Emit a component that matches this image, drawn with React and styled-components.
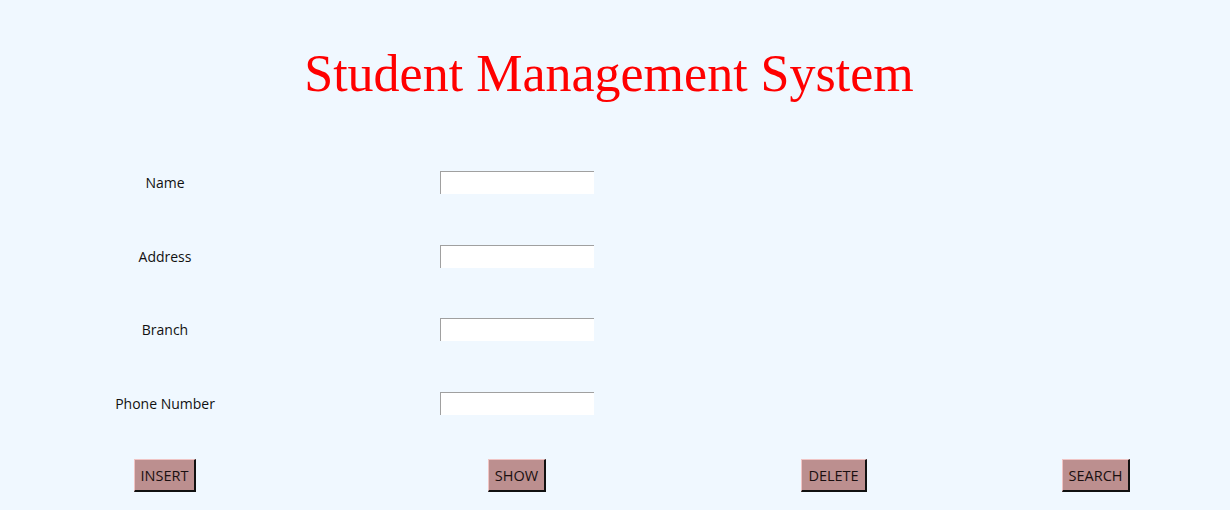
import React from "react";
import styled, { createGlobalStyle } from "styled-components";

const GlobalStyle = createGlobalStyle`
  html, body {
    margin: 0;
    padding: 0;
    background: #f0f8ff;
  }
`;

const Window = styled.div`
  width: 1230px;
  height: 510px;
  background: #f0f8ff;
  display: flex;
  flex-direction: column;
  font-family: "Open Sans", "Noto Sans", sans-serif;
  overflow: hidden;
`;

const TitleBar = styled.div`
  height: 146px;
  display: flex;
  justify-content: center;
  align-items: flex-start;
  padding: 44px 12px 0 0;
  box-sizing: border-box;
`;

const Title = styled.h1`
  margin: 0;
  font-family: "Liberation Serif", "DejaVu Serif", serif;
  font-weight: normal;
  font-size: 52px;
  line-height: 60px;
  color: #ff0000;
`;

const FormGrid = styled.div`
  display: grid;
  grid-template-columns: 330px 374px 260px 264px;
  grid-auto-rows: 73.5px;
  align-items: center;
  justify-items: center;
`;

const Label = styled.span`
  grid-column: 1;
  font-size: 14px;
  color: #111;
`;

const Entry = styled.input`
  grid-column: 2;
  width: 154px;
  height: 23px;
  box-sizing: border-box;
  background: #fff;
  border: none;
  border-top: 1px solid #a0a0a0;
  border-left: 1px solid #a0a0a0;
  outline: none;
  padding: 0 3px;
  font-size: 13px;
`;

const ButtonRow = styled.div`
  display: grid;
  grid-template-columns: 330px 374px 260px 264px;
  height: 69px;
  padding-top: 2px;
  box-sizing: border-box;
  align-items: center;
  justify-items: center;
`;

const Button = styled.button`
  height: 33px;
  padding: 0 6px;
  background: #bc8f8f;
  color: #1a0f10;
  font-family: "Open Sans", "Noto Sans", sans-serif;
  font-size: 14.5px;
  border: none;
  border-top: 1px solid #f0c4c4;
  border-left: 1px solid #f0c4c4;
  border-right: 2px solid #111;
  border-bottom: 2px solid #111;
  cursor: pointer;
`;

const fields = ["Name", "Address", "Branch", "Phone Number"];
const actions = ["INSERT", "SHOW", "DELETE", "SEARCH"];

export default function App() {
  return (
    <>
      <GlobalStyle />
      <Window>
        <TitleBar>
          <Title>Student Management System</Title>
        </TitleBar>
        <FormGrid>
          {fields.map((f) => (
            <React.Fragment key={f}>
              <Label>{f}</Label>
              <Entry />
            </React.Fragment>
          ))}
        </FormGrid>
        <ButtonRow>
          {actions.map((a) => (
            <Button key={a}>{a}</Button>
          ))}
        </ButtonRow>
      </Window>
    </>
  );
}
